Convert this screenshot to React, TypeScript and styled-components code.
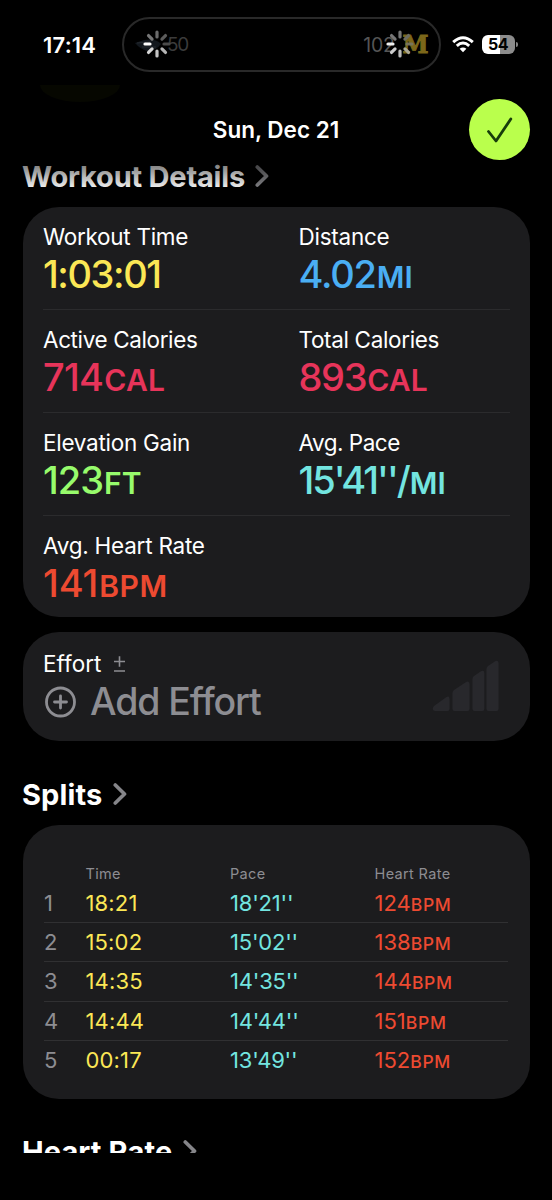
import React from "react";
import styled, { createGlobalStyle } from "styled-components";

const GlobalStyle = createGlobalStyle`
  * { box-sizing: border-box; }
  body { margin: 0; background: #000; }
`;

const colors = {
  yellow: "#fbe755",
  blue: "#4aaef3",
  pink: "#e7345a",
  green: "#97fb6c",
  teal: "#73e5e0",
  red: "#ed4a31",
  gray: "#8d8d92",
};

const Screen = styled.main`
  position: relative;
  width: 552px;
  height: 1200px;
  overflow: hidden;
  background: #000;
  color: #fff;
  font-family: Inter, "Liberation Sans", sans-serif;
  white-space: nowrap;
`;

const StatusBar = styled.header`
  display: flex;
  align-items: center;
  height: 89px;
  padding-left: 43px;
`;

const Clock = styled.span`
  width: 79px;
  font-size: 22px;
  font-weight: 600;
  letter-spacing: 0.2px;
`;

const Island = styled.div`
  display: flex;
  align-items: center;
  justify-content: space-between;
  width: 319px;
  height: 55px;
  padding: 0 10.5px 0 10px;
  border: 2px solid #292929;
  border-radius: 28px;
`;

const Activity = styled.div`
  position: relative;
  display: flex;
  align-items: center;
  font-size: 19.5px;
`;

const LeftScore = styled.span`
  margin-left: 5px;
  color: #3b3b3b;
  font-size: 19px;
  letter-spacing: -1.2px;
`;

const RightScore = styled.span`
  color: #555;
  letter-spacing: -0.3px;
`;

const BlockM = styled.span`
  margin-left: 8px;
  color: #7c671a;
  font: bold 23.5px/28px "DejaVu Serif", serif;
  -webkit-text-stroke: 0.9px #7c671a;
`;

const SpinnerSvg = styled.svg<{ $left: number }>`
  position: absolute;
  left: ${(p) => p.$left}px;
  top: 50%;
  margin-top: -14.5px;
`;

const Wifi = styled.svg`
  margin-left: 11px;
`;

const Battery = styled.div`
  position: relative;
  width: 33px;
  height: 18.5px;
  margin-left: 7.5px;
  border-radius: 6px;
  background: linear-gradient(90deg, #fff 54%, #8c8c8c 54%);
  color: #000;
  font-size: 16px;
  font-weight: 700;
  line-height: 19px;
  letter-spacing: -0.6px;
  text-align: center;
  &::after {
    content: "";
    position: absolute;
    right: -3px;
    top: 7px;
    width: 2px;
    height: 5px;
    border-radius: 0 2px 2px 0;
    background: #858585;
  }
`;

const RingShadow = styled.div`
  position: absolute;
  left: 40px;
  top: 85px;
  width: 80px;
  height: 17px;
  border-radius: 0 0 50% 50% / 0 0 100% 100%;
  background: #060700;
`;

const NavBar = styled.div`
  display: grid;
  grid-template-columns: 61px 1fr 61px;
  align-items: center;
  height: 80px;
  padding: 0 22px;
`;

const NavTitle = styled.h1`
  grid-column: 2;
  margin: 0;
  padding-top: 2px;
  font-size: 22.5px;
  font-weight: 600;
  line-height: 30px;
  text-align: center;
`;

const DoneButton = styled.button`
  width: 61px;
  height: 61px;
  padding: 0;
  border: 0;
  border-radius: 50%;
  background: #baff4c;
`;

const SectionTitle = styled.h2<{ $top: number; $clip?: number; $track?: number }>`
  display: flex;
  align-items: flex-start;
  height: ${(p) => (p.$clip ? `${p.$clip}px` : "38px")};
  margin: ${(p) => p.$top}px 0 0 22px;
  overflow: hidden;
  font-size: 29px;
  font-weight: 700;
  line-height: 39px;
  letter-spacing: ${(p) => p.$track ?? -0.2}px;
`;

const ChevronSvg = styled.svg`
  flex: none;
  margin: 7px 0 0 10.5px;
`;

const FadedArea = styled.div`
  position: relative;
  &::before,
  &::after {
    content: "";
    position: absolute;
    z-index: 1;
    inset: 0 260px 8px 0;
    background: linear-gradient(rgba(0, 0, 0, 0.5) 25%, rgba(0, 0, 0, 0.08));
  }
  &::after {
    bottom: 20px;
    background: none;
    backdrop-filter: blur(0.7px);
    mask-image: linear-gradient(#000 50%, transparent);
  }
`;

const Card = styled.section<{ $height: number; $top: number }>`
  width: 507px;
  height: ${(p) => p.$height}px;
  margin: ${(p) => p.$top}px 0 0 22.5px;
  border-radius: 36px;
  background: #1c1c1e;
`;

const MetricRow = styled.div`
  display: grid;
  grid-template-columns: 255.5px 1fr;
  height: 103px;
  margin: 0 20px;
  padding-top: 13px;
  &:first-child {
    height: 102px;
  }
  & + & {
    border-top: 1px solid #2b2b2d;
  }
`;

const Label = styled.div<{ $track?: number }>`
  height: 33.5px;
  padding-left: 0.5px;
  font-size: 22.5px;
  line-height: 34px;
  letter-spacing: ${(p) => p.$track ?? 0}px;
`;

const Value = styled.div<{ $color: string; $track?: number }>`
  height: 42px;
  padding-left: 0.5px;
  color: ${(p) => p.$color};
  font-size: 38px;
  font-weight: 500;
  line-height: 42px;
  letter-spacing: ${(p) => p.$track ?? -0.7}px;
`;

const Unit = styled.span<{ $track?: number }>`
  margin-left: 1px;
  font-size: 30px;
  font-weight: 600;
  letter-spacing: ${(p) => p.$track ?? 0.1}px;
`;

const EffortBody = styled.div`
  display: flex;
  justify-content: space-between;
  padding: 15px 31px 0 20px;
`;

const PlusMinusSvg = styled.svg`
  margin-left: 12px;
`;

const AddEffort = styled.div`
  display: flex;
  align-items: center;
  gap: 13.5px;
  height: 43px;
  color: ${colors.gray};
  font-size: 37.5px;
  font-weight: 500;
  letter-spacing: -1.1px;
`;

const Bars = styled.svg`
  margin-top: 13px;
`;

const SplitRow = styled.div<{ $height: number }>`
  display: grid;
  grid-template-columns: 41.5px 144.5px 144.5px 1fr;
  height: ${(p) => p.$height}px;
  margin: 0 22px 0 21px;
  padding-left: 0.5px;
  line-height: 38.4px;
  font-size: 22px;
  & + & {
    border-top: 1px solid #303032;
  }
`;

const SplitHead = styled.div`
  display: grid;
  grid-template-columns: 42px 144.5px 144.5px 1fr;
  height: 59.5px;
  margin: 0 22px 0 21px;
  padding-top: 39px;
  color: ${colors.gray};
  font-size: 14.5px;
  line-height: 20px;
  letter-spacing: 0.35px;
`;

const SplitRows = styled.div``;

const SplitCell = styled.span<{ $color: string; $track?: number }>`
  color: ${(p) => p.$color};
  letter-spacing: ${(p) => p.$track ?? 0}px;
`;

const SplitUnit = styled.span`
  font-size: 17.5px;
  font-weight: 500;
  letter-spacing: 0.7px;
`;

const Spinner = ({ left, tones }: { left: number; tones: string[] }) => (
  <SpinnerSvg $left={left} width="28" height="28" viewBox="-14 -14 28 28">
    {tones.map((tone, i) => (
      <line
        key={i}
        x1="0"
        y1="-7"
        x2="0"
        y2="-12"
        stroke={tone}
        strokeWidth="3.2"
        strokeLinecap="round"
        transform={`rotate(${i * 45})`}
      />
    ))}
  </SpinnerSvg>
);

const Chevron = () => (
  <ChevronSvg width="14" height="24" viewBox="0 0 14 24" fill="none">
    <path
      d="M2.3 3 L11.5 12 L2.3 21"
      stroke="#858589"
      strokeWidth="3.7"
      strokeLinecap="round"
      strokeLinejoin="round"
    />
  </ChevronSvg>
);

interface Metric {
  label: string;
  value: string;
  unit?: string;
  color: string;
  labelTrack?: number;
  track?: number;
  unitTrack?: number;
}

const metrics: Metric[][] = [
  [
    { label: "Workout Time", value: "1:03:01", color: colors.yellow, labelTrack: -0.28, track: -1.4 },
    { label: "Distance", value: "4.02", unit: "MI", color: colors.blue, labelTrack: -0.25, track: -1.2 },
  ],
  [
    { label: "Active Calories", value: "714", unit: "CAL", color: colors.pink, labelTrack: -0.38, unitTrack: 0.3 },
    { label: "Total Calories", value: "893", unit: "CAL", color: colors.pink, labelTrack: -0.34, track: -1.3 },
  ],
  [
    { label: "Elevation Gain", value: "123", unit: "FT", color: colors.green, labelTrack: -0.27, track: -1 },
    { label: "Avg. Pace", value: "15'41''/", unit: "MI", color: colors.teal, labelTrack: -0.5, track: -2 },
  ],
  [{ label: "Avg. Heart Rate", value: "141", unit: "BPM", color: colors.red, labelTrack: -0.24, track: -0.1, unitTrack: 0.6 }],
];

const splits = [
  { time: "18:21", pace: "18'21''", rate: 124 },
  { time: "15:02", pace: "15'02''", rate: 138 },
  { time: "14:35", pace: "14'35''", rate: 144 },
  { time: "14:44", pace: "14'44''", rate: 151 },
  { time: "00:17", pace: "13'49''", rate: 152 },
];

export default function App() {
  return (
    <Screen>
      <GlobalStyle />
      <StatusBar>
        <Clock>17:14</Clock>
        <Island>
          <Activity>
            <svg width="28" height="16" viewBox="0 0 28 16">
              <path d="M1 6 L10 3 Q22 1 27 7 Q22 14 13 14 Q6 12 1 6Z" fill="#12171d" />
              <path d="M3 6 L16 5 M8 10 L22 10" stroke="#252a30" />
            </svg>
            <LeftScore>50</LeftScore>
            <Spinner
              left={8.5}
              tones={["#6b6b6b", "#5c5c5c", "#4b4b4b", "#b4b4b4", "#c4c4c4", "#d8d8d8", "#fff", "#777"]}
            />
          </Activity>
          <Activity>
            <RightScore>102</RightScore>
            <BlockM>M</BlockM>
            <Spinner
              left={23}
              tones={["#777", "#6c6c62", "#77735c", "#aaa896", "#bbb", "#ccc", "#eee", "#777"]}
            />
          </Activity>
        </Island>
        <Wifi width="22" height="17" viewBox="0 0 22 17" fill="none" stroke="#fff" strokeWidth="3">
          <path d="M1.2 6.1 Q11 -2.7 20.8 6.1" />
          <path d="M4.8 9.8 Q11 4.3 17.2 9.8" />
          <path d="M7.6 12.8 Q11 10 14.4 12.8 L11 16.3Z" fill="#fff" stroke="none" />
        </Wifi>
        <Battery>54</Battery>
      </StatusBar>
      <RingShadow />

      <NavBar>
        <NavTitle>Sun, Dec 21</NavTitle>
        <DoneButton aria-label="Done">
          <svg width="61" height="61" viewBox="0 0 61 61" fill="none">
            <path
              d="M19.5 32.5 L27 42 L41.8 20"
              stroke="#173d0b"
              strokeWidth="2.8"
              strokeLinecap="round"
              strokeLinejoin="round"
            />
          </svg>
        </DoneButton>
      </NavBar>

      <FadedArea>
        <SectionTitle $top={-12}>
          Workout Details <Chevron />
        </SectionTitle>
      </FadedArea>
      <Card $height={410.5} $top={11.5}>
        {metrics.map((row, i) => (
          <MetricRow key={i}>
            {row.map((m) => (
              <div key={m.label}>
                <Label $track={m.labelTrack}>{m.label}</Label>
                <Value $color={m.color} $track={m.track}>
                  {m.value}
                  {m.unit && <Unit $track={m.unitTrack}>{m.unit}</Unit>}
                </Value>
              </div>
            ))}
          </MetricRow>
        ))}
      </Card>

      <Card $height={109} $top={14.5}>
        <EffortBody>
          <div>
            <Label>
              Effort
              <PlusMinusSvg width="13" height="16" viewBox="0 0 13 16" fill="none" stroke={colors.gray} strokeWidth="1.6">
                <path d="M1 5.5 H12 M6.5 0.3 V10.7 M1 15 H12" />
              </PlusMinusSvg>
            </Label>
            <AddEffort>
              <svg width="34" height="34" viewBox="0 0 34 34" fill="none" stroke={colors.gray} strokeWidth="2.8" strokeLinecap="round">
                <circle cx="17.5" cy="17" r="14" />
                <path d="M11.5 17 H23.5 M17.5 11 V23" />
              </svg>
              Add Effort
            </AddEffort>
          </div>
          <Bars width="67" height="52" viewBox="0 0 67 52" fill="#28282c">
            <path d="M2 46 L14.5 37 Q17.5 35.5 17.5 39 V49 Q17.5 51 15.5 51 H3 Q-1 50 2 46Z" />
            <path d="M22 30 L34.5 21.8 Q37.5 20.5 37.5 24 V49 Q37.5 51 35.5 51 H22.5 Q20.5 51 20.5 49 V33 Q20.5 31 22 30Z" />
            <path d="M42 16 L49 11.2 Q52.3 10 52.3 13 V49 Q52.3 51 50.3 51 H42.5 Q40.5 51 40.5 49 V19 Q40.5 17 42 16Z" />
            <path d="M56 6 L63.5 1 Q66.5 0 66.5 3 V49 Q66.5 51 64.5 51 H56.5 Q54.5 51 54.5 49 V9 Q54.5 7 56 6Z" />
          </Bars>
        </EffortBody>
      </Card>

      <SectionTitle $top={34} $track={0.1}>
        Splits <Chevron />
      </SectionTitle>
      <Card $height={274.5} $top={12}>
        <SplitHead>
          <span />
          <span>Time</span>
          <span>Pace</span>
          <span>Heart Rate</span>
        </SplitHead>
        <SplitRows>
          {splits.map((s, i) => (
            <SplitRow key={s.time} $height={i === 0 ? 38 : 39.3}>
              <SplitCell $color={colors.gray}>{i + 1}</SplitCell>
              <SplitCell $color={colors.yellow} $track={0.15}>{s.time}</SplitCell>
              <SplitCell $color={colors.teal} $track={-0.2}>{s.pace}</SplitCell>
              <SplitCell $color={colors.red}>
                {s.rate}
                <SplitUnit>BPM</SplitUnit>
              </SplitCell>
            </SplitRow>
          ))}
        </SplitRows>
      </Card>

      <SectionTitle $top={33} $clip={21} $track={0.1}>
        Heart Rate <Chevron />
      </SectionTitle>
    </Screen>
  );
}
